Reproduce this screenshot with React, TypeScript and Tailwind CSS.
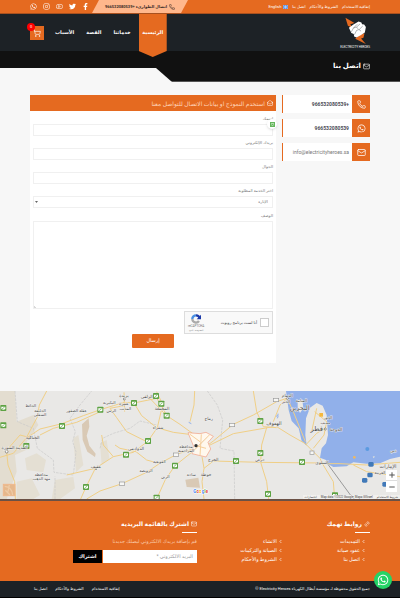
import { ChevronLeft, Link2, Mail, MailOpen, Minus, Phone, Plus, ShoppingCart, Youtube } from 'lucide-react';
import { FaFacebookF, FaInstagram, FaTwitter, FaWhatsapp } from 'react-icons/fa';

const TOP_LINKS = ['إتفاقية الاستخدام', 'الشروط والأحكام', 'اتصل بنا'];

const NAV = ['خدماتنا', 'القصة', 'الأسباب'];

const SOCIALS = [
  { label: 'Facebook', Icon: FaFacebookF },
  { label: 'Twitter', Icon: FaTwitter },
  { label: 'YouTube', Icon: Youtube },
  { label: 'Instagram', Icon: FaInstagram },
  { label: 'WhatsApp', Icon: FaWhatsapp },
];

const CONTACTS = [
  { text: '+966532080539', href: 'tel:+966532080539', Icon: Phone, bold: true },
  { text: '966532080539', href: '#whatsapp', Icon: FaWhatsapp, bold: true },
  { text: 'info@electricityheroes.sa', href: 'mailto:info@electricityheroes.sa', Icon: Mail, bold: false },
];

const FOOTER_LINKS = [
  ['التمديدات', 'عقود صيانة', 'اتصل بنا'],
  ['الانشاء', 'الصيانة والتركيبات', 'الشروط والأحكام'],
];

const FIELDS = [
  { id: 'name', label: 'اسمك', type: 'text' },
  { id: 'email', label: 'بريدك الإلكتروني', type: 'email' },
  { id: 'phone', label: 'الجوال', type: 'tel' },
];

// Map drawing units: 3 per pixel
const MAP_LABELS: [number, number, string, number][] = [
  [92, 66, 'الحائط', 12], [120, 82, 'الحليفة', 12], [120, 94, 'السفلى', 12], [230, 80, 'عقلة الصقور', 12],
  [372, 36, 'بريدة', 13], [372, 60, 'عنيزة', 13], [328, 58, 'البكيرية', 12], [376, 74, 'المذنب', 12],
  [334, 82, 'الرس', 12], [440, 38, 'الزلفي', 13], [486, 76, 'المجمعة', 13], [474, 132, 'شقراء', 12],
  [98, 161, 'الحناكية', 13], [44, 193, 'المدينة المنورة', 13], [408, 194, 'الدوادمي', 13], [288, 249, 'عفيف', 13],
  [124, 272, 'محافظة', 12], [124, 284, 'مهد الذهب', 12], [478, 235, 'القويعية', 12], [438, 260, 'الرويضة', 12],
  [496, 280, 'الرين', 12], [558, 188, 'محافظة', 12], [558, 200, 'المزاحمية', 12], [574, 272, 'ساحة', 12],
  [626, 105, 'رماح', 13], [862, 36, 'الدمام', 13], [858, 54, 'الخبر', 12], [904, 50, 'المنامة', 12],
  [899, 74, 'البحرين', 19], [984, 102, 'الخور', 12], [976, 116, 'مسيعيد', 10], [950, 138, 'قطر', 20],
  [1008, 137, 'الدوحة', 14], [822, 121, 'الهفوف', 15], [640, 229, 'الخرج', 13], [780, 229, 'حرض', 12],
  [966, 236, 'السلوى', 13], [618, 274, 'حوطة', 13], [1164, 250, 'الإمارات', 15], [1140, 268, 'العربية', 12],
  [1180, 200, 'دبي', 13],
];

const MAP_SHIELDS: [number, number][] = [
  [10, 69], [10, 121], [79, 183], [186, 123], [301, 74], [402, 54], [468, 33], [484, 56], [500, 92], [444, 168],
  [378, 209], [525, 242], [258, 306], [470, 338], [781, 108], [781, 204], [708, 228], [906, 231], [804, 327], [1005, 331],
];

const MAP_ROADS = [
  'M0 217L40 205L78 160L120 132L186 116L250 92L301 74L340 62L372 52L402 54L470 40L484 60L500 92',
  'M120 150L160 130L230 112L301 80M20 200L24 240L44 290L46 342M98 160L60 150L20 196',
  'M140 18L118 60L112 96L78 160M372 22L374 80M402 54L425 92L470 128L520 142L584 150',
  'M372 62L330 70L350 98L380 140L440 170M484 76L472 128L444 168L400 202L340 215L286 250L258 306L242 342',
  'M584 190L530 208L478 236L440 262L366 296L300 318L260 342M584 195L525 242L496 284L470 342',
  'M480 236L440 225L408 200L360 190L345 180M286 250L200 270M340 215L310 180L305 150',
  'M440 30L484 76L500 92L540 118L584 150M470 20L484 50M584 18L582 60L570 110',
  'M610 190L640 168L700 118L760 90L830 50L860 40M630 180L700 146L820 125M640 228L708 230L780 232L966 234',
  'M760 18L770 80L790 125L830 128M800 128L785 180L782 232L800 290L806 342M830 125L870 150L916 176L930 190L960 220L966 234L1000 290L1004 342',
  'M862 40L840 60L820 110M862 40L880 80L916 170M917 180L950 145L975 130M944 80L980 110L972 150L940 190M950 70L935 140',
  'M606 215L612 250L606 290L612 342M612 250L640 228M966 236L1020 236L1100 240L1200 232M1060 240L1100 260L1200 275',
];

const FOCUS = 'outline-none focus:border-[#e56a20]';

function Logo() {
  return (
    <a href="#home" aria-label="Electricity Heroes" className="flex flex-col items-center gap-px">
      <svg viewBox="0 0 60 78" className="h-[27px] w-[21px]">
        <path d="M1 2L27 17L15 21L21 31L8 25Z" fill="#e56a20" />
        <path d="M56 47L42 52L29 63L60 78L46 62L53 60Z" fill="#e56a20" />
        <path d="M11 31L24 22L39 13L47 16L49 21L55 22L60 29L57 45L46 52L33 59L26 56L25 49L18 46Z" fill="#fff" />
        <path d="M18 43L24 32L32 29L38 34M27 51L33 39L40 36L46 41M24 32L35 21M33 29L43 20M41 36L51 26" fill="none" stroke="#1d2226" strokeWidth="1" />
      </svg>
      <span className="text-[3px] leading-[4px] text-white" dir="ltr">ELECTRICITY HEROES</span>
    </a>
  );
}

function TopBar() {
  return (
    <div className="flex h-[13px] items-center justify-between bg-[#e56a20] px-[30px] text-white">
      <nav className="flex items-center gap-1 text-[4px]">
        {TOP_LINKS.map(l => (
          <a key={l} href="#page">{l}</a>
        ))}
        <a href="#english" className="flex items-center gap-0.5">
          <svg viewBox="0 0 10 8" className="h-1 w-[5px]">
            <rect width="10" height="8" fill="#4f86dd" />
            <path d="M0 0L10 8M10 0L0 8M5 0V8M0 4H10" stroke="#cfe0fb" strokeWidth="1" />
          </svg>
          English
        </a>
      </nav>
      <div className="flex h-full items-center gap-[3px]">
        <a
          href="tel:+966532080539"
          className="flex h-full w-[96px] items-center justify-center gap-0.5 bg-[#ffb78c] text-[4px] font-bold text-[#3a2c28] [clip-path:polygon(7px_0,100%_0,calc(100%_-_7px)_100%,0_100%)]"
        >
          <Phone className="size-[6px]" />
          <span className="whitespace-nowrap">اتصال الطوارىء +966532080539</span>
        </a>
        <div className="flex items-center gap-1.5">
          {SOCIALS.map(({ label, Icon }) => (
            <a key={label} href="#social" aria-label={label}>
              <Icon className="size-[7px]" />
            </a>
          ))}
        </div>
      </div>
    </div>
  );
}

function Header() {
  return (
    <header className="flex h-[38px] items-center justify-between border-t border-[#a8501e] bg-[#1d2226] px-[30px] text-white">
      <Logo />
      <div className="flex h-full items-center gap-[11px]">
        <nav className="flex h-full items-center gap-3 text-[5px] font-bold">
          <a
            href="#home"
            className="relative z-10 -me-1 flex h-[43px] w-7 items-center justify-center self-start bg-[#e56a20] pb-1.5 [clip-path:polygon(0_0,100%_0,100%_37px,50%_100%,0_37px)]"
          >
            الرئيسية
          </a>
          {NAV.map(n => (
            <a key={n} href="#page">{n}</a>
          ))}
        </nav>
        <a href="#cart" aria-label="السلة" className="relative flex size-[14px] items-center justify-center bg-[#e56a20]">
          <ShoppingCart className="size-2" />
          <span className="absolute -top-[3px] -left-[3px] flex size-[8px] items-center justify-center rounded-full bg-[#f00] text-[4px]">0</span>
        </a>
      </div>
    </header>
  );
}

function Contacts() {
  return (
    <aside className="flex w-[88px] flex-col gap-[6px]">
      {CONTACTS.map(({ text, href, Icon, bold }) => (
        <a key={text} href={href} className="flex h-[18px] items-center bg-white text-[#4b4b55]">
          <span className="flex size-[18px] shrink-0 items-center justify-center bg-[#e56a20] text-white">
            <Icon className="size-[9px]" />
          </span>
          <span className={`min-w-0 flex-1 ps-[3px] text-[5px] leading-[8px] whitespace-nowrap ${bold ? 'font-bold' : 'text-[#777]'}`}>
            {text}
          </span>
          <span className="h-full w-px shrink-0 bg-[#e56a20]" />
        </a>
      ))}
    </aside>
  );
}

function ContactForm() {
  return (
    <section className="relative min-w-0 flex-1 bg-white pb-[15px]">
      <h2 className="flex h-4 items-center gap-0.5 bg-[#e56a20] px-[3px] text-[6px] text-[#ffd5bb]">
        <MailOpen className="size-[6px] text-white" />
        استخدم النموذج او بيانات الاتصال للتواصل معنا
      </h2>
      <form className="flex flex-col px-[3px] pt-1 text-[4px] text-[#777]" onSubmit={e => e.preventDefault()}>
        {FIELDS.map(f => (
          <div key={f.id} className="mb-[3px] flex flex-col">
            <label htmlFor={f.id} className="h-[9px] leading-[8px]">{f.label}</label>
            <input id={f.id} type={f.type} className={`h-3 border border-[#f0f0f0] bg-white px-1 ${FOCUS}`} />
          </div>
        ))}
        <label htmlFor="service" className="h-[9px] leading-[8px]">اختر الخدمة المطلوبة</label>
        <div className="relative">
          <select id="service" className={`h-3 w-full appearance-none border border-[#f0f0f0] bg-white px-1 text-[4px] ${FOCUS}`}>
            <option>الإنارة</option>
          </select>
          <svg viewBox="0 0 6 4" className="pointer-events-none absolute top-[5px] left-[2px] h-[2px] w-[3px]">
            <path d="M0 0L3 4L6 0" fill="#666" />
          </svg>
        </div>
        <label htmlFor="description" className="mt-1 h-[9px] leading-[8px]">الوصف</label>
        <div className="relative flex">
          <textarea id="description" className={`h-[88px] w-full resize-none border border-[#f0f0f0] bg-white p-1 ${FOCUS}`} />
          <svg viewBox="0 0 6 6" className="pointer-events-none absolute bottom-px left-px size-[2px]">
            <path d="M0 0L6 6M0 3L3 6" stroke="#888" />
          </svg>
        </div>
        <div className="mt-[2px] flex h-[23px] w-[89px] items-center justify-between border border-[#ddd] bg-[#f9f9f9] px-[3px]">
          <label className="flex items-center gap-[3px] text-[4px] text-[#444]">
            <input type="checkbox" className="size-[9px] appearance-none border border-[#ccc] bg-white checked:bg-[#4285f4]" />
            أنا لست برنامج روبوت
          </label>
          <div className="flex flex-col items-center text-[2px] leading-[4px]">
            <svg viewBox="0 0 30 30" className="size-[10px]" fill="none" strokeWidth="7">
              <path d="M4 15A11 11 0 0 1 15 4" stroke="#4a90e2" />
              <path d="M15 4A11 11 0 0 1 26 15" stroke="#1c3aa9" />
              <path d="M30 2V16H17Z" fill="#1c3aa9" />
              <path d="M4 15A11 11 0 0 0 24 21" stroke="#ababab" />
            </svg>
            <span dir="ltr" className="text-[3px]">reCAPTCHA</span>
            <span>الخصوصية - البنود</span>
          </div>
        </div>
        <button type="submit" className="h-[14px] w-[42px] self-center rounded-[1px] bg-[#e56a20] text-[5px] text-white">
          إرسال
        </button>
      </form>
      <span className="absolute top-[24px] -right-px flex size-[10px] items-center justify-center rounded-full bg-white shadow">
        <svg viewBox="0 0 10 10" className="size-[5px]">
          <rect width="10" height="10" fill="#64b55b" />
          <path d="M2 3H8M2 5L5 7L8 5" stroke="#fff" fill="none" />
        </svg>
      </span>
    </section>
  );
}

function MapView() {
  return (
    <section className="relative h-[110px] overflow-hidden border-b-2 border-[#6b5145] bg-[#e9e8e6]">
      <svg viewBox="0 18 1200 324" preserveAspectRatio="xMidYMid slice" className="h-full w-full" aria-label="خريطة">
        <rect y="18" width="1200" height="324" fill="#e9e8e6" />
        <path d="M0 18H45L50 110L100 90L115 120L80 170L90 190L45 210L50 260L20 342H0Z" fill="#e3ddd0" />
        <path d="M75 220L110 205L138 225L130 262L80 255ZM50 290L95 280L120 330L100 342H50ZM165 285L220 275L225 310L180 342H155ZM220 160L235 150L250 240L228 262ZM300 175L320 165L328 220L305 240Z" fill="#e4dfd3" />
        <path d="M266 100L246 118L248 165L262 200L285 216L287 206L268 182L260 152L268 125Z" fill="#d9c9b5" />
        <path d="M556 284L595 278L600 308L560 306Z" fill="#d9c9b5" />
        <path d="M858 18H1200V215L1170 222L1140 235L1100 236L1060 232L1040 244L1000 246L985 238L978 225L960 218L965 190L978 175L984 150L980 90L968 62L950 54L930 68L918 100L916 150L920 182L905 168L896 130L875 108L866 75Z" fill="#91b0ea" />
        <path d="M893 45L907 44L910 70L900 84L893 70Z" fill="#ece9e3" />
        <path d="M1090 205L1100 203M1118 215L1124 213L1122 220Z" fill="#e9e5da" />
        <g fill="none" stroke="#c9c8c8" strokeWidth="2">
          <path d="M45 18L52 110L100 130L112 190L160 225L162 262L220 270L228 200L218 170L226 140L210 100L240 60L275 18" strokeDasharray="8 3" />
          <path d="M300 190L308 160L340 145L390 130L420 108L470 120M165 342V275M622 18L652 60L668 105L660 190L702 198L704 342" strokeDasharray="8 3" />
        </g>
        <path d="M978 230L1060 342" stroke="#999" strokeWidth="3" />
        <g fill="none" strokeLinejoin="round">
          {MAP_ROADS.map(d => (
            <path key={d} d={d} stroke="#f0cf86" strokeWidth="3" />
          ))}
        </g>
        <path d="M564 143L600 146L618 142L640 154L624 172L632 192L618 216L576 206L580 182Z" fill="#fff8ee" stroke="#f29b7e" strokeWidth="2" />
        <path d="M570 148L600 170M578 200L600 178L628 150M588 182L618 190M604 148L600 212" stroke="#f6cf9b" strokeWidth="3" />
        <circle cx="588" cy="182" r="5" fill="#333" />
        <path d="M828 94Q838 88 832 100M834 86V92M1054 190L1064 200M566 112L574 116" stroke="#91b0ea" strokeWidth="3" fill="none" />
        <g fill="#f7f7f5" stroke="#999" strokeWidth="2">
          <rect x="358" y="291" width="16" height="10" />
          <rect x="520" y="204" width="16" height="10" />
          <rect x="688" y="115" width="16" height="10" />
          <rect x="820" y="40" width="16" height="10" />
          <rect x="930" y="198" width="12" height="10" />
        </g>
        {MAP_SHIELDS.map(([x, y]) => (
          <g key={`${x}-${y}`} transform={`translate(${x - 9} ${y - 9})`}>
            <rect width="18" height="18" rx="2" fill="#5da243" />
            <path d="M3 5H15V12Q9 16 3 12Z" fill="#fff" />
            <path d="M5 12L13 6" stroke="#5da243" strokeWidth="2" />
          </g>
        ))}
        {[[1113, 238], [1110, 270], [1094, 286], [1155, 298]].map(([x, y]) => (
          <rect key={x} x={x - 8} y={y - 7} width="16" height="14" rx="4" fill="#4179b8" />
        ))}
        <circle cx="1102" cy="192" r="6" fill="#5b9ae0" />
        <circle cx="1063" cy="217" r="4" fill="#f0b860" />
        <rect x="958" y="84" width="11" height="11" fill="#f5b83d" />
        <g fill="#fff" stroke="#666" strokeWidth="2">
          <circle cx="20" cy="200" r="4" />
          <circle cx="288" cy="252" r="2" />
          <circle cx="373" cy="42" r="3" />
          <circle cx="862" cy="40" r="3" />
          <circle cx="976" cy="132" r="3" />
        </g>
        <g textAnchor="middle" fill="#4b4b4b" stroke="#f4f3f1" strokeWidth="2" paintOrder="stroke">
          {MAP_LABELS.map(([x, y, text, size]) => (
            <text key={`${x}-${y}`} x={x} y={y} fontSize={size}>{text}</text>
          ))}
        </g>
        <text x="602" y="325" textAnchor="middle" direction="ltr" fontSize="14" fontWeight="bold" stroke="#fff" strokeWidth="3" paintOrder="stroke">
          <tspan fill="#4285f4">G</tspan><tspan fill="#ea4335">o</tspan><tspan fill="#fbbc05">o</tspan><tspan fill="#4285f4">g</tspan><tspan fill="#34a853">l</tspan><tspan fill="#ea4335">e</tspan>
        </text>
        <g>
          <rect x="10" y="298" width="35" height="34" fill="#e6b88c" stroke="#f0b98c" strokeWidth="3" />
          <path d="M14 304Q36 306 38 330M16 316L30 330M28 300L24 320" stroke="#efcba6" strokeWidth="4" fill="none" />
        </g>
      </svg>
      <div className="absolute right-[3px] bottom-[7px] flex w-[11px] flex-col divide-y divide-[#ddd] bg-white text-[#555]">
        <button aria-label="تكبير" className="flex h-[11px] items-center justify-center"><Plus className="size-2" strokeWidth={3} /></button>
        <button aria-label="تصغير" className="flex h-[11px] items-center justify-center"><Minus className="size-2" strokeWidth={3} /></button>
      </div>
      <div className="absolute right-0 bottom-0 flex gap-1 bg-[#f1f0ee] px-0.5 text-[3px] leading-[4px] text-[#444]">
        <span>شروط الاستخدام</span>
        <span dir="ltr">Map data ©2022 Google, Mapa GISrael</span>
        <span>اختصارات</span>
      </div>
    </section>
  );
}

function FooterHeading({ icon, children }: { icon: React.ReactNode; children: React.ReactNode }) {
  return (
    <h3 className="flex flex-col items-start gap-[3px] text-[6px] leading-[10px] font-bold">
      <span className="flex items-center gap-0.5 whitespace-nowrap">{icon}{children}</span>
      <span className="h-px w-[15px] bg-white" />
    </h3>
  );
}

function Footer() {
  return (
    <footer className="text-white">
      <div className="flex h-[80px] items-start justify-between bg-[#e56a20] px-[30px] pt-[18px]">
        <div>
          <FooterHeading icon={<Link2 className="size-[6px] -rotate-45" />}>روابط تهمك</FooterHeading>
          <div className="mt-1 flex ps-1">
            {FOOTER_LINKS.map(col => (
              <ul key={col[0]} className="w-[83px]">
                {col.map(l => (
                  <li key={l} className="h-[9px] text-[5px] leading-[9px]">
                    <a href="#page" className="flex items-center gap-px">
                      <ChevronLeft className="size-[5px]" strokeWidth={3} />
                      {l}
                    </a>
                  </li>
                ))}
              </ul>
            ))}
          </div>
        </div>
        <div className="me-[43px] w-[124px]">
          <FooterHeading icon={<Mail className="size-[6px]" />}>اشترك بالقائمة البريدية</FooterHeading>
          <p className="mt-1 text-[5px] leading-[9px] whitespace-nowrap text-[#f9c9a8]">قم بإضافة بريدك الالكتروني ليصلك جديدنا</p>
          <form className="mt-1 flex h-[13px] gap-px" onSubmit={e => e.preventDefault()}>
            <input
              type="email"
              aria-label="البريد الالكتروني"
              placeholder="البريد الالكتروني *"
              className="min-w-0 flex-1 bg-white px-1 text-[5px] text-[#555] outline-none placeholder:text-[#999]"
            />
            <button type="submit" className="w-[29px] bg-black text-[5px] font-bold">اشتراك</button>
          </form>
        </div>
      </div>
      <div className="flex h-[17px] items-center justify-between border-b border-black bg-[#1d2226] px-[30px] text-[4px] whitespace-nowrap">
        <p>جميع الحقوق محفوظة لـ مؤسسة أبطال الكهرباء Electricity Heroes ©</p>
        <nav className="flex gap-2 pe-1">
          {TOP_LINKS.map(l => (
            <a key={l} href="#page">{l}</a>
          ))}
        </nav>
      </div>
    </footer>
  );
}

export default function App() {
  return (
    <div dir="rtl" className="relative min-h-screen bg-[#f7f7f7] font-[Roboto,'DejaVu_Sans',sans-serif]">
      <TopBar />
      <Header />
      <div className="relative flex h-[31px] items-center border-b border-[#555] bg-[#111] px-[30px]">
        <h1 className="flex items-center gap-0.5 text-[7px] font-bold text-white">
          <Mail className="size-[7px]" />
          اتصل بنا
        </h1>
        <span className="absolute -bottom-px left-0 h-[14px] w-[172px] bg-[#f7f7f7] [clip-path:polygon(0_0,156px_0,100%_100%,0_100%)]" />
      </div>
      <main className="flex items-start gap-[6px] px-[30px] pt-[13px] pb-[28px]">
        <Contacts />
        <ContactForm />
      </main>
      <MapView />
      <Footer />
      <a
        href="#whatsapp"
        aria-label="WhatsApp"
        className="absolute right-2 bottom-[9px] flex size-[18px] items-center justify-center rounded-full bg-[#25d366] text-white"
      >
        <FaWhatsapp className="size-3" />
      </a>
    </div>
  );
}
